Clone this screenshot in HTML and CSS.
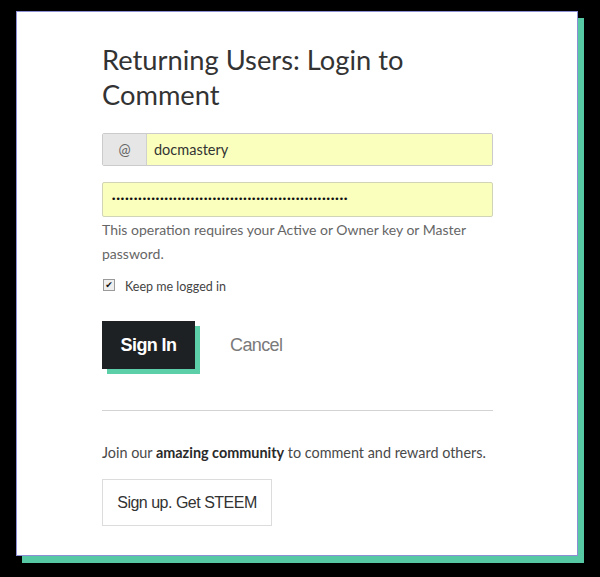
FILE: index.html
```html
<!DOCTYPE html>
<html>
<head>
<meta charset="utf-8">
<link rel="stylesheet" href="styles.css">
</head>
<body>
<div class="page">
  <div class="card">
    <h1 class="title">Returning Users: Login to Comment</h1>
    <div class="field-group">
      <span class="addon">@</span>
      <span class="field-value">docmastery</span>
    </div>
    <div class="field password"><span class="dots">••••••••••••••••••••••••••••••••••••••••••••••••••••••</span></div>
    <p class="help">This operation requires your Active or Owner key or Master password.</p>
    <label class="keep"><span class="box">✔</span><span>Keep me logged in</span></label>
    <div class="actions">
      <span class="btn-primary">Sign In</span>
      <span class="btn-cancel">Cancel</span>
    </div>
    <hr class="divider">
    <p class="join">Join our <strong>amazing community</strong> to comment and reward others.</p>
    <span class="btn-signup">Sign up. Get STEEM</span>
  </div>
</div>
</body>
</html>
```
FILE: styles.css
```css
html, body {
  margin: 0;
  background: #000;
}
.page {
  padding: 11px 0 0 16px;
  height: 577px;
  box-sizing: border-box;
}
.card {
  width: 562px;
  height: 545px;
  box-sizing: border-box;
  background: #fff;
  border: 1px solid #8c8fd4;
  box-shadow: 6px 7px 0 #56c9a4;
  padding: 30px 84px 0 85px;
  font-family: Lato, "Open Sans", sans-serif;
  color: #333;
}
.title {
  margin: 0;
  font-weight: 400;
  font-size: 27.3px;
  line-height: 35px;
  color: #333;
}
.field-group {
  margin-top: 21px;
  display: flex;
  height: 33px;
  box-sizing: border-box;
  border: 1px solid #cbcbcb;
  border-radius: 2px;
  overflow: hidden;
}
.addon {
  width: 43px;
  flex: none;
  background: #e6e6e6;
  border-right: 1px solid #d0d0d0;
  display: flex;
  align-items: center;
  justify-content: center;
  font-size: 14.5px;
  color: #666;
}
.field-value {
  flex: 1;
  background: #faffbd;
  display: flex;
  align-items: center;
  padding-left: 7px;
  font-size: 14.5px;
  color: #333;
}
.field {
  margin-top: 16px;
  height: 35px;
  box-sizing: border-box;
  border: 1px solid #d2d4b8;
  border-radius: 2px;
  background: #faffbd;
  display: flex;
  align-items: center;
  padding-left: 8px;
}
.dots {
  font-family: "DejaVu Sans", sans-serif;
  font-size: 9px;
  letter-spacing: -0.93px;
  color: #111;
  line-height: 1;
}
.help {
  margin: 1px 0 0;
  font-size: 14px;
  line-height: 24px;
  color: #666;
}
.keep {
  margin-top: 10px;
  display: flex;
  align-items: center;
  height: 20px;
  font-size: 12.5px;
  color: #444;
}
.box {
  width: 10px;
  height: 10px;
  border: 1px solid #9a9a9a;
  background: #eee;
  margin: 0 10px 0 1px;
  display: flex;
  align-items: center;
  justify-content: center;
  font-family: "DejaVu Sans", sans-serif;
  font-size: 9px;
  line-height: 1;
  color: #111;
  position: relative;
  top: -1px;
}
.actions {
  margin-top: 25px;
  display: flex;
  align-items: center;
}
.btn-primary {
  width: 93px;
  height: 48px;
  background: #1e2124;
  box-shadow: 5px 5px 0 #5ccfa8;
  color: #fff;
  display: flex;
  align-items: center;
  justify-content: center;
  font-family: "Liberation Sans", Arial, sans-serif;
  font-weight: 700;
  font-size: 18px;
  letter-spacing: -0.6px;
}
.btn-cancel {
  margin-left: 35px;
  font-family: "Liberation Sans", Arial, sans-serif;
  font-size: 18px;
  letter-spacing: -0.6px;
  color: #7a7a7a;
}
.divider {
  margin: 41px 0 0;
  border: 0;
  border-top: 1px solid #d3d3d3;
  height: 0;
}
.join {
  margin: 30px 0 0;
  font-size: 14.4px;
  line-height: 24px;
  color: #4a4a4a;
}
.join strong {
  font-weight: 700;
  color: #2a2a2a;
}
.btn-signup {
  margin-top: 14px;
  width: 170px;
  height: 47px;
  box-sizing: border-box;
  border: 1px solid #dcdcdc;
  display: flex;
  align-items: center;
  justify-content: center;
  font-family: "Liberation Sans", Arial, sans-serif;
  font-size: 16px;
  letter-spacing: -0.5px;
  color: #333;
}
```
